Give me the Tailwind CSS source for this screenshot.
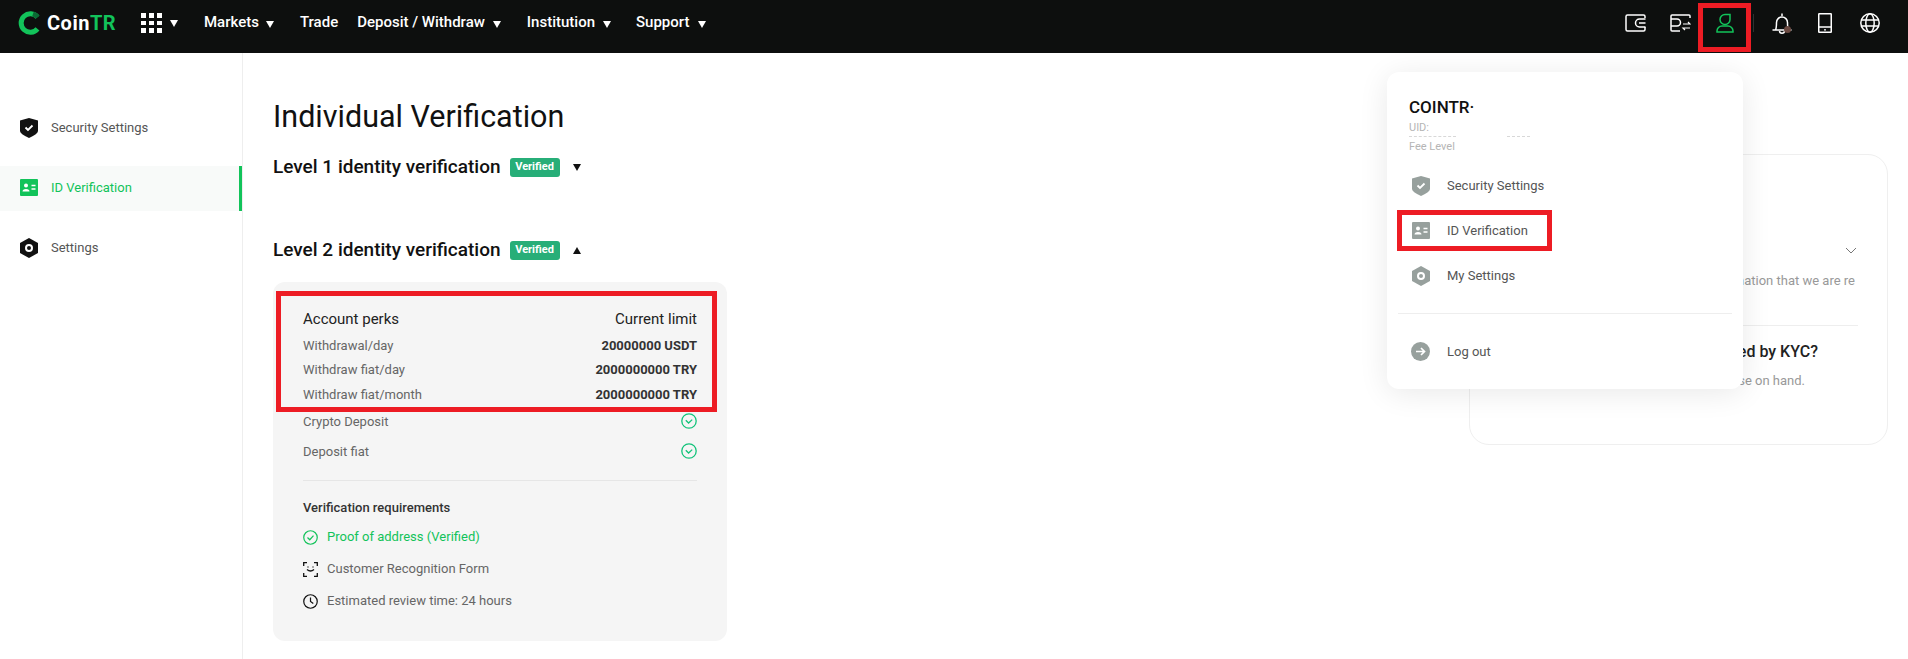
<!DOCTYPE html>
<html lang="en">
<head>
    <meta charset="UTF-8">
    <title>CoinTR - Individual Verification</title>
    <script src="https://cdn.jsdelivr.net/npm/@tailwindcss/browser@4"></script>
</head>
<body class="bg-white font-[Roboto,sans-serif] text-[#111]">
<div class="relative h-[659px] w-[1908px] overflow-hidden">

    <!-- Top bar -->
    <header class="flex h-[53px] items-center bg-[#0d0f0e] pb-[7px] text-white">
        <svg class="ml-[18px] h-[24px] w-[22px]" viewBox="0 0 22 24" fill="none">
            <path d="M19.5 6.2A9.2 9.2 0 1 0 19.5 17.8" stroke="#12c35a" stroke-width="5"/>
            <path d="M15 2.9A9.2 9.2 0 0 1 19.5 6.2" stroke="#0a6b34" stroke-width="5"/>
        </svg>
        <span class="ml-[7px] w-[70px] text-[20px] font-bold tracking-[0.5px]"><span>Coin</span><span class="text-[#12c35a]">TR</span></span>
        <div class="ml-[24px] grid h-[20px] w-[21px] grid-cols-3 gap-[3px]">
            <i class="bg-white"></i><i class="bg-white"></i><i class="bg-white"></i>
            <i class="bg-white"></i><i class="bg-white"></i><i class="bg-white"></i>
            <i class="bg-white"></i><i class="bg-white"></i><i class="bg-white"></i>
        </div>
        <svg class="ml-[8px] h-[7px] w-[8px]" viewBox="0 0 8 7"><path d="M0 0h8L4 7z" fill="#fff"/></svg>
        <nav class="ml-[26px] -mt-[2px] flex items-center text-[15px] font-medium">
            <span>Markets</span>
            <svg class="ml-[7px] mt-[5px] h-[7px] w-[8px]" viewBox="0 0 8 7"><path d="M0 0h8L4 7z" fill="#fff"/></svg>
            <span class="ml-[26px]">Trade</span>
            <span class="ml-[19px]">Deposit / Withdraw</span>
            <svg class="ml-[8px] mt-[5px] h-[7px] w-[8px]" viewBox="0 0 8 7"><path d="M0 0h8L4 7z" fill="#fff"/></svg>
            <span class="ml-[26px]">Institution</span>
            <svg class="ml-[8px] mt-[5px] h-[7px] w-[8px]" viewBox="0 0 8 7"><path d="M0 0h8L4 7z" fill="#fff"/></svg>
            <span class="ml-[25px]">Support</span>
            <svg class="ml-[9px] mt-[5px] h-[7px] w-[8px]" viewBox="0 0 8 7"><path d="M0 0h8L4 7z" fill="#fff"/></svg>
        </nav>

        <div class="ml-auto mr-[28px] flex items-center">
            <!-- wallet -->
            <svg class="h-[18px] w-[21px]" viewBox="0 0 21 18" fill="none" stroke="#fff" stroke-width="1.5">
                <path d="M20 4V2.5A1.5 1.5 0 0 0 18.500 1H2.500A1.500 1.500 0 0 0 1 2.500v13A1.500 1.500 0 0 0 2.500 17h16a1.500 1.500 0 0 0 1.500-1.500V13"/>
                <path d="M20.500 5h-6a4 4 0 0 0 0 8h6"/><path d="M14 9h6.500"/>
            </svg>
            <!-- wallet transfer -->
            <svg class="ml-[24px] h-[18px] w-[21px]" viewBox="0 0 21 18" fill="none" stroke="#fff" stroke-width="1.5">
                <path d="M20 4V2A1 1 0 0 0 19 1H2A1 1 0 0 0 1 2v14a1 1 0 0 0 1 1h8"/>
                <path d="M1 5h6a3 3 0 0 1 0 7H1"/>
                <path d="M13 10h7l-2-2M20 14h-7l2 2" stroke-width="1.200"/>
            </svg>
            <!-- user -->
            <svg class="ml-[25px] h-[20px] w-[18px]" viewBox="0 0 18 20" fill="none" stroke="#12c35a" stroke-width="1.500">
                <path d="M14 1.500v5A5 5 0 1 1 9 1.500z"/>
                <path d="M1 19v-1a5 5 0 0 1 5-5h6a5 5 0 0 1 5 5v1z"/>
            </svg>
            <span class="ml-[19px] h-[18px] w-px bg-[#2f3130]"></span>
            <!-- bell -->
            <div class="relative ml-[18px] h-[21px] w-[20px]">
                <svg class="h-[21px] w-[20px]" viewBox="0 0 20 21" fill="none" stroke="#fff" stroke-width="1.500">
                    <path d="M10 0.500v2.500M0.500 17h19M3.500 17c1-2 1-3.500 1-7.500a5.500 5.500 0 0 1 11 0c0 4 0 5.500 1 7.500M7.500 18a2.500 2.200 0 0 0 5 0"/>
                </svg>
                <span class="absolute bottom-[1px] right-[1px] h-[7px] w-[7px] rounded-full bg-[#6b4a42]"></span>
            </div>
            <!-- tablet -->
            <svg class="ml-[26px] h-[20px] w-[14px]" viewBox="0 0 14 20" fill="none" stroke="#fff" stroke-width="1.500">
                <rect x="0.750" y="0.750" width="12.500" height="18.500" rx="0.500"/><path d="M1 14h12"/><path d="M6 16.800h2" stroke-width="1.200"/>
            </svg>
            <!-- globe -->
            <svg class="ml-[28px] h-[20px] w-[20px]" viewBox="0 0 20 20" fill="none" stroke="#fff" stroke-width="1.500">
                <circle cx="10" cy="10" r="9.200"/><ellipse cx="10" cy="10" rx="4.200" ry="9.200"/><path d="M1 7h18M1 13h18"/>
            </svg>
        </div>
    </header>

    <!-- Red marker round the user icon -->
    <div class="absolute left-[1698px] top-[3px] h-[49px] w-[53px] border-[5px] border-[#ed1c24]"></div>

    <main class="flex h-[606px]">
        <!-- Sidebar -->
        <aside class="w-[243px] shrink-0 border-r border-[#eeeeee] pt-[62px] text-[13px] text-[#555]">
            <div class="flex h-[26px] items-center pl-[20px]">
                <svg class="h-[20px] w-[18px]" viewBox="0 0 18 20"><path d="M0 2.500 9 0l9 2.500V13q0 3-9 7-9-4-9-7z" fill="#111"/><path d="m5.500 9.500 2.500 2.500 4.500-4.500" fill="none" stroke="#fff" stroke-width="1.800"/></svg>
                <span class="ml-[13px]">Security Settings</span>
            </div>
            <div class="relative mt-[25px] flex h-[45px] items-center bg-[#f8faf9] pb-[2px] pl-[20px] text-[#12c35a]">
                <svg class="h-[17px] w-[18px]" viewBox="0 0 18 17"><rect width="18" height="17" rx="1" fill="#12c35a"/><circle cx="6" cy="6.500" r="2" fill="#fff"/><path d="M2.500 12.500q0-2.500 3.500-2.500t3.500 2.500z" fill="#fff"/><path d="M11.500 6.500h4M11.500 10h4" stroke="#fff" stroke-width="1.400"/></svg>
                <span class="ml-[13px]">ID Verification</span>
                <span class="absolute bottom-0 right-0 top-0 w-[3px] bg-[#12c35a]"></span>
            </div>
            <div class="mt-[24px] flex h-[26px] items-center pl-[20px]">
                <svg class="h-[20px] w-[18px]" viewBox="0 0 18 20"><path d="M9 0l9 5v10l-9 5-9-5V5z" fill="#111"/><circle cx="9" cy="10" r="3" fill="none" stroke="#fff" stroke-width="2"/></svg>
                <span class="ml-[13px]">Settings</span>
            </div>
        </aside>

        <div class="flex flex-1 justify-between pl-[30px] pr-[20px] pt-[46px]">
            <!-- Verification column -->
            <section class="w-[454px]">
                <h1 class="whitespace-nowrap text-[30.5px] leading-[36px]">Individual Verification</h1>
                <div class="mt-[22px] flex h-[20px] items-center">
                    <h2 class="text-[19px] font-medium">Level 1 identity verification</h2>
                    <span class="ml-[9px] flex h-[19px] w-[50px] items-center justify-center rounded-[3px] bg-[#27ae78] text-[11px] font-bold text-white">Verified</span>
                    <svg class="ml-[13px] h-[7px] w-[8px]" viewBox="0 0 8 7"><path d="M0 0h8L4 7z" fill="#111"/></svg>
                </div>
                <div class="mt-[63px] flex h-[20px] items-center">
                    <h2 class="text-[19px] font-medium">Level 2 identity verification</h2>
                    <span class="ml-[9px] flex h-[19px] w-[50px] items-center justify-center rounded-[3px] bg-[#27ae78] text-[11px] font-bold text-white">Verified</span>
                    <svg class="ml-[13px] h-[7px] w-[8px]" viewBox="0 0 8 7"><path d="M0 7h8L4 0z" fill="#111"/></svg>
                </div>

                <div class="relative mt-[22px] h-[359px] rounded-[12px] bg-[#f5f5f5] pl-[30px] pr-[30px] pt-[25px] text-[13px] text-[#666]">
                    <div class="flex h-[24px] items-center justify-between text-[15px] text-[#222]">
                        <span>Account perks</span><span>Current limit</span>
                    </div>
                    <div class="mt-[3px] flex h-[24px] items-center justify-between">
                        <span>Withdrawal/day</span><span class="font-bold text-[#333]">20000000 USDT</span>
                    </div>
                    <div class="flex h-[24px] items-center justify-between">
                        <span>Withdraw fiat/day</span><span class="font-bold text-[#333]">2000000000 TRY</span>
                    </div>
                    <div class="mt-px flex h-[24px] items-center justify-between">
                        <span>Withdraw fiat/month</span><span class="font-bold text-[#333]">2000000000 TRY</span>
                    </div>
                    <div class="mt-[3px] flex h-[24px] items-center justify-between">
                        <span>Crypto Deposit</span>
                        <svg class="-mt-[2px] h-[16px] w-[16px]" viewBox="0 0 16 16" fill="none" stroke="#12c37a" stroke-width="1.300"><circle cx="8" cy="8" r="7.200"/><path d="m4.800 7.200 2.800 2.800 3.600-3.400"/></svg>
                    </div>
                    <div class="mt-[6px] flex h-[24px] items-center justify-between">
                        <span>Deposit fiat</span>
                        <svg class="-mt-[2px] h-[16px] w-[16px]" viewBox="0 0 16 16" fill="none" stroke="#12c37a" stroke-width="1.300"><circle cx="8" cy="8" r="7.200"/><path d="m4.800 7.200 2.800 2.800 3.600-3.400"/></svg>
                    </div>
                    <div class="mt-[16px] h-px bg-[#e6e6e6]"></div>
                    <div class="mt-[15px] flex h-[24px] items-center font-medium text-[#333]">Verification requirements</div>
                    <div class="mt-[5px] flex h-[24px] items-center text-[#12c35a]">
                        <svg class="h-[15px] w-[15px]" viewBox="0 0 16 16" fill="none" stroke="#12c35a" stroke-width="1.300"><circle cx="8" cy="8" r="7.200"/><path d="m4.800 8 2.400 2.400 4-4.400"/></svg>
                        <span class="ml-[9px]">Proof of address (Verified)</span>
                    </div>
                    <div class="mt-[8px] flex h-[24px] items-center">
                        <svg class="h-[15px] w-[15px]" viewBox="0 0 15 15" fill="none" stroke="#111" stroke-width="1.300"><path d="M.7 4V.7H4M11 .7h3.300V4M14.300 11v3.300H11M4 14.300H.7V11"/><path d="M4 7.500q3.500 3 7 0" /><path d="M5 4.500v1M10 4.500v1"/></svg>
                        <span class="ml-[9px]">Customer Recognition Form</span>
                    </div>
                    <div class="mt-[8px] flex h-[24px] items-center">
                        <svg class="h-[15px] w-[15px]" viewBox="0 0 16 16" fill="none" stroke="#111" stroke-width="1.300"><circle cx="8" cy="8" r="7.200"/><path d="M8 3.800V8l3 2.200"/></svg>
                        <span class="ml-[9px]">Estimated review time: 24 hours</span>
                    </div>
                    <!-- Red marker round the limits -->
                    <div class="absolute left-[3px] top-[9px] h-[121px] w-[441px] border-[5px] border-[#ed1c24]"></div>
                </div>
            </section>

            <!-- FAQ card, mostly covered by the menu -->
            <section class="mt-[55px] h-[291px] w-[419px] rounded-[20px] border border-[#efefef] pl-[30px] pr-[29px]">
                <div class="mt-[92px] flex justify-end pr-[1px]">
                    <svg class="h-[8px] w-[12px]" viewBox="0 0 12 8" fill="none" stroke="#777"><path d="m1 1 5 5 5-5"/></svg>
                </div>
                <p class="mt-[16px] overflow-hidden whitespace-nowrap pr-[3px] text-right text-[13px] leading-[20px] text-[#999]">Personal information that we are re</p>
                <div class="mt-[34px] h-px bg-[#eeeeee]"></div>
                <p class="mt-[16px] pr-[40px] text-right text-[16px] font-medium leading-[20px] text-[#222]">What can be accessed by KYC?</p>
                <p class="mt-[9px] pr-[53px] text-right text-[13px] leading-[20px] text-[#999]">Have these close on hand.</p>
            </section>
        </div>
    </main>

    <!-- Account dropdown -->
    <div class="absolute left-[1387px] top-[72px] h-[317px] w-[356px] rounded-[12px] bg-white pl-[22px] pt-[23px] shadow-[0_4px_30px_rgba(0,0,0,0.09)]">
        <div class="h-[24px] text-[17px] font-medium leading-[24px]">COINTR·</div>
        <div class="mt-[1px] flex h-[17px] items-start text-[11px] leading-[16px] text-[#b5b5b5]">
            <span class="h-[17px] w-[47px] border-b border-dashed border-[#d8d8d8]">UID:</span>
            <span class="ml-[51px] h-[17px] w-[23px] border-b border-dashed border-[#d8d8d8]"></span>
        </div>
        <div class="mt-[2px] h-[16px] text-[11px] leading-[16px] text-[#b5b5b5]">Fee Level</div>

        <div class="mt-[8px] flex h-[45px] items-center pl-[3px] text-[13px] text-[#555]">
            <svg class="h-[20px] w-[18px]" viewBox="0 0 18 20"><path d="M0 2.500 9 0l9 2.500V13q0 3-9 7-9-4-9-7z" fill="#97a09d"/><path d="m5.500 9.500 2.500 2.500 4.500-4.500" fill="none" stroke="#fff" stroke-width="1.800"/></svg>
            <span class="ml-[17px]">Security Settings</span>
        </div>
        <div class="flex h-[45px] items-center pl-[3px] text-[13px] text-[#555]">
            <svg class="h-[17px] w-[18px]" viewBox="0 0 18 17"><rect width="18" height="17" rx="1" fill="#97a09d"/><circle cx="6" cy="6.500" r="2" fill="#fff"/><path d="M2.500 12.500q0-2.500 3.500-2.500t3.500 2.500z" fill="#fff"/><path d="M11.500 6.500h4M11.500 10h4" stroke="#fff" stroke-width="1.400"/></svg>
            <span class="ml-[17px]">ID Verification</span>
        </div>
        <div class="flex h-[45px] items-center pl-[3px] text-[13px] text-[#555]">
            <svg class="h-[20px] w-[18px]" viewBox="0 0 18 20"><path d="M9 0l9 5v10l-9 5-9-5V5z" fill="#97a09d"/><circle cx="9" cy="10" r="3" fill="none" stroke="#fff" stroke-width="2"/></svg>
            <span class="ml-[17px]">My Settings</span>
        </div>
        <div class="-ml-[11px] mt-[15px] h-px w-[334px] bg-[#eeeeee]"></div>
        <div class="mt-[15px] flex h-[45px] items-center pl-[2px] text-[13px] text-[#555]">
            <svg class="h-[19px] w-[19px]" viewBox="0 0 19 19"><circle cx="9.500" cy="9.500" r="9.500" fill="#97a09d"/><path d="M5 9.500h8.500M10 6l3.500 3.500L10 13" fill="none" stroke="#fff" stroke-width="1.700"/></svg>
            <span class="ml-[17px]">Log out</span>
        </div>

        <!-- Red marker round the menu entry -->
        <div class="absolute left-[10px] top-[138px] h-[41px] w-[155px] border-[5px] border-[#ed1c24]"></div>
    </div>
</div>
</body>
</html>
